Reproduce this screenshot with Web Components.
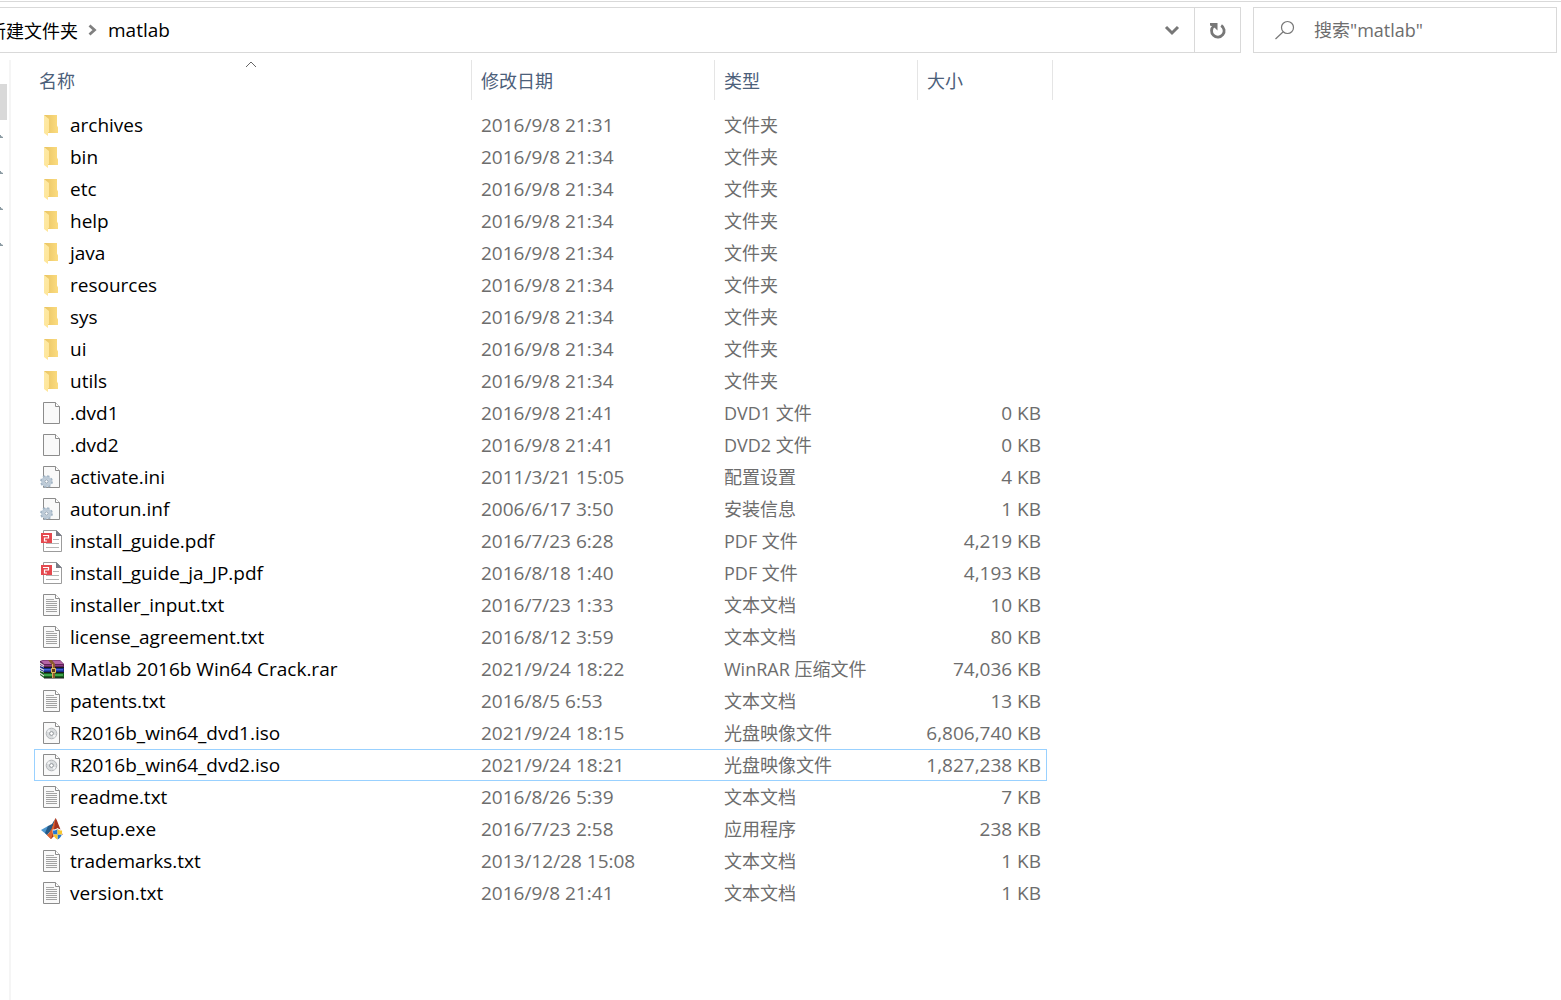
<!DOCTYPE html>
<html lang="zh-CN">
<head>
<meta charset="utf-8">
<title>matlab</title>
<style>
html,body{height:100%;margin:0;background:#fff}
body{font-family:"Open Sans","Noto Sans CJK SC",sans-serif;font-size:18px;color:#000}
</style>
</head>
<body>
<explorer-window>
  <address-bar slot="address"><a href="#parent" slot="parent">新建文件夹</a><a href="#matlab" slot="current">matlab</a></address-bar>
  <search-box slot="search" label='搜索"matlab"'></search-box>
  <nav-strip slot="nav"></nav-strip>
  <file-table slot="files"></file-table>
</explorer-window>
<script>
const define = (name, html, setup) => customElements.define(name, class extends HTMLElement {
  connectedCallback() {
    if (this.shadowRoot) return;
    const t = document.createElement('template');
    t.innerHTML = html;
    this.attachShadow({mode: 'open'}).append(t.content.cloneNode(true));
    if (setup) setup(this, this.shadowRoot);
  }
});

define('explorer-window', `
<style>
:host{display:flex;flex-direction:column;min-height:100%;box-sizing:border-box;border-top:1px solid #fff}
header{display:flex;gap:12px;border-top:1px solid #d9d9d9;padding:5px 4px 7px 0}
main{display:flex;flex:1}
slot[name=address]::slotted(*){flex:1;min-width:0}
slot[name=files]::slotted(*){flex:1;min-width:0}
</style>
<header><slot name="address"></slot><slot name="search"></slot></header>
<main><slot name="nav"></slot><slot name="files"></slot></main>`);

define('address-bar', `
<style>
:host{display:flex;box-sizing:border-box;height:46px;border:1px solid #d9d9d9;border-left:0}
nav{flex:1;display:flex;align-items:center;min-width:0}
.parent{display:flex;justify-content:flex-end;width:78px;overflow:hidden;white-space:nowrap;font-size:18px}
.current{font-size:19px}
::slotted(a){color:#000;text-decoration:none}
button{border:0;background:none;padding:0;width:45px;display:grid;place-items:center}
.refresh{border-left:1px solid #d9d9d9;width:46px}
.sep{width:30px;display:grid;place-items:center}
svg{display:block}
</style>
<nav aria-label="路径"><span class="parent"><slot name="parent"></slot></span>
<span class="sep"><svg width="12" height="12" fill="none" stroke="#808080" stroke-width="2.8"><path d="M2.500 1.500 7.500 6l-5 4.500"/></svg></span>
<span class="current"><slot name="current"></slot></span></nav>
<button aria-label="历史记录"><svg width="16" height="12" fill="none" stroke="#777" stroke-width="3"><path d="m2 3 6 6 6-6"/></svg></button>
<button class="refresh" aria-label="刷新"><svg width="18" height="18"><path d="M12.200 4.500A6.300 6.300 0 1 1 4.800 5" fill="none" stroke="#777" stroke-width="2.800"/><path d="M1 2h7.500v7.500L6.200 7.200 3.800 5.500 1 4.500z" fill="#777"/></svg></button>`);

define('search-box', `
<style>
:host{display:flex;align-items:center;box-sizing:border-box;width:304px;height:46px;border:1px solid #d9d9d9;padding-left:20px;gap:19px}
label{display:block}
svg{display:block}
input{flex:1;min-width:0;border:0;outline:0;padding:0;background:none;font:inherit;font-size:18px;color:#6d6d6d}
input::placeholder{color:#6d6d6d;opacity:1}
</style>
<label for="q" aria-label="搜索"><svg width="21" height="20" fill="none" stroke="#777" stroke-width="1.200"><circle cx="13.500" cy="7.500" r="6"/><path d="M9.200 11.800 1.500 19"/></svg></label>
<input id="q" type="text">`, (el, root) => {
  root.querySelector('input').placeholder = el.getAttribute('label');
});

define('nav-strip', `
<style>
:host{display:flex;flex-direction:column;box-sizing:border-box;width:11px;border-right:2px solid #f5f5f5}
.selected{width:7px;height:36px;margin-top:24px;background:#d9d9d9}
.pin{display:flex;align-items:center;height:36px}
</style>
<div class="selected"></div>`, (el, root) => {
  for (let i = 0; i < 4; i++) root.append(Object.assign(document.createElement('div'), {
    className: 'pin',
    innerHTML: '<svg width="4" height="8"><path d="M0 1 1 1 1 2 3 3v1L0 4z" fill="#8b9aa2"/></svg>'
  }));
});

const page = '<path d="M3.500 1.500h12l4 4v17h-16z" fill="#f9f9f9" stroke="#8c8c8c"/><path d="M15.500 1.500v4h4" fill="#fff" stroke="#8c8c8c"/>';
const rows = (ys, x1, x2, c) => `<path d="${ys.map(y => `M${x1} ${y}H${x2}`).join('')}" stroke="${c}" fill="none"/>`;
const art = {
  folder: '<defs><linearGradient id="b"><stop stop-color="#e9c362"/><stop offset="1" stop-color="#fbdc80"/></linearGradient><linearGradient id="f" y2="1"><stop stop-color="#fdeaa8"/><stop offset="1" stop-color="#ffe596"/></linearGradient></defs><path d="M4 2h13v10.500l1 2V20H6z" fill="url(#b)"/><path d="m4 2 5 4v13l-1 .5V23l-4-3z" fill="url(#f)"/>',
  blank: page,
  config: page + '<circle cx="6.500" cy="16.500" r="5.400" fill="#c3d0dc" stroke="#a3b5c5" stroke-width="2" stroke-dasharray="2.300 1.940"/><circle cx="6.500" cy="16.500" r="3.600" fill="#e8eff5" stroke="#bccad7" stroke-width="2.400"/><circle cx="6.500" cy="16.500" r="1.700" fill="#fff" stroke="#8799aa"/>',
  pdf: '<path d="M3.500 1.500h13l5 5v16h-18z" fill="#fff" stroke="#9c9c9c"/><path d="M16 1v6h6z" fill="#787c87"/>' + rows([10.5], 13, 19, '#b5b5b5') + rows([14.5, 18.5], 6, 19, '#b5b5b5') + '<path d="M1 4h11v10H1z" fill="#e5494f"/><path d="M3 6.500h5.500v2.500h-4v3H7" fill="none" stroke="#fff" stroke-width="1.200"/>',
  text: page + rows([6.5], 6, 14, '#aaa') + rows([8.5, 10.5, 12.5, 14.5, 16.5, 18.5], 6, 17, '#a2a2a2'),
  iso: page + '<circle cx="11.500" cy="12.500" r="5.300" fill="#d9dcde" stroke="#b2b5b8"/><path d="m11.500 12.500-4.500-2 2-2.500zm0 0 4.500 2-2 2.500z" fill="#f3f4f5"/><circle cx="11.500" cy="12.500" r="1.900" fill="#fff" stroke="#8e9397"/>',
  rar: '<path d="M0 4 3 3h17l4 4v3H4L0 8z" fill="#5f2358"/><path d="m1 4 3-.5h16L23.500 7H4z" fill="#b565a6"/><path d="M4 8h19v1H4z" fill="#8d3d83"/><path d="M0 9l4 1.500h20V15H4l-4-2z" fill="#172a86"/><path d="M4 12h19v1.500H4z" fill="#3f66d8"/><path d="M0 14l4 1.500h20V21H4l-4-3z" fill="#175f20"/><path d="M4 17h19v2H4z" fill="#3da54a"/><path d="m0 5.500 4 2.500v1.500L0 7zm0 5 4 2v1.500l-4-2zm0 5 4 2.500v1.500L0 17z" fill="#ddd"/><path d="M4 10.500h20M4 15.500h20M4 21h20" stroke="#1b1b1b"/><path d="M8 3h4l3 4v14h-3V8z" fill="#8a5a2e"/><path d="M12.500 7v14" stroke="#dba95b"/><path d="M11.500 11.500h4v4h-4z" fill="#5d3817" stroke="#e3bd63"/>',
  matlab: '<path d="m1 13 7-4 4 3-5 6z" fill="#4d97cf"/><path d="m8 9 4-2 3-5-3 10-5 6-2-2z" fill="#275a86"/><path d="M15.500 1C17 2 19 10 23 18l-6-2-6 6-4-4c4-2 6-10 8.500-17z" fill="#a5331f"/><path d="M15.500 1c-1 6-1 13-4.500 21l-4-4c4-2 6-10 8.500-17z" fill="#dd6530"/><path d="M12.500 12.500c2 0 3.500-.5 5-1.500 1.500 1 3.500 1.500 5.500 1.500 0 5-1.500 8.500-5.500 10.500-3.500-2-5-5.500-5-10.500z" fill="#fff"/><path d="M17.500 12v5.500h-4.200c-.2-1-.3-2.500-.3-4 2 0 3.200-.5 4.500-1.500zM17.500 17.500h4.300c-.8 2.500-2.200 4-4.300 5z" fill="#2478cf"/><path d="M17.500 12c1.300 1 2.700 1.500 4.600 1.500 0 1.500-.1 3-.3 4h-4.300zM13.300 17.500h4.200v5c-2-1-3.500-2.500-4.200-5z" fill="#f8c62c"/>'
};

define('file-icon', '<style>:host{display:block;width:24px;height:24px}svg{display:block}</style>', (el, root) => {
  root.innerHTML += `<svg width="24" height="24" viewBox="0 0 24 24" aria-hidden="true">${art[el.getAttribute('kind')]}</svg>`;
});

const D = '文件夹', T = '文本文档', I = '光盘映像文件';
const files = [
  ['folder','archives','2016/9/8 21:31',D,''],
  ...['bin','etc','help','java','resources','sys','ui','utils'].map(n => ['folder',n,'2016/9/8 21:34',D,'']),
  ['blank','.dvd1','2016/9/8 21:41','DVD1 文件','0 KB'],
  ['blank','.dvd2','2016/9/8 21:41','DVD2 文件','0 KB'],
  ['config','activate.ini','2011/3/21 15:05','配置设置','4 KB'],
  ['config','autorun.inf','2006/6/17 3:50','安装信息','1 KB'],
  ['pdf','install_guide.pdf','2016/7/23 6:28','PDF 文件','4,219 KB'],
  ['pdf','install_guide_ja_JP.pdf','2016/8/18 1:40','PDF 文件','4,193 KB'],
  ['text','installer_input.txt','2016/7/23 1:33',T,'10 KB'],
  ['text','license_agreement.txt','2016/8/12 3:59',T,'80 KB'],
  ['rar','Matlab 2016b Win64 Crack.rar','2021/9/24 18:22','WinRAR 压缩文件','74,036 KB'],
  ['text','patents.txt','2016/8/5 6:53',T,'13 KB'],
  ['iso','R2016b_win64_dvd1.iso','2021/9/24 18:15',I,'6,806,740 KB'],
  ['iso','R2016b_win64_dvd2.iso','2021/9/24 18:21',I,'1,827,238 KB'],
  ['text','readme.txt','2016/8/26 5:39',T,'7 KB'],
  ['matlab','setup.exe','2016/7/23 2:58','应用程序','238 KB'],
  ['text','trademarks.txt','2013/12/28 15:08',T,'1 KB'],
  ['text','version.txt','2016/9/8 21:41',T,'1 KB']
];

define('file-table', `
<style>
:host{display:block;padding-left:23px}
table{table-layout:fixed;width:1019px;border-collapse:separate;border-spacing:0}
.name{width:438px}.date{width:243px}.type{width:203px}.size{width:129px}.edge{width:6px}
th{padding:0 0 9px;font-weight:400}
th button{position:relative;display:block;box-sizing:border-box;width:100%;height:40px;padding:0 9px;border:0;border-right:1px solid #e5e5e5;background:none;font:inherit;font-size:18px;color:#4c607a;text-align:left}
th:first-child button{padding:0 5px}
.sort{position:absolute;top:0;left:50%;margin-left:-8px}
td{box-sizing:border-box;height:32px;padding:0 9px;font-size:19px;line-height:24px;color:#6d6d6d;white-space:nowrap;border:solid transparent;border-width:1px 0}
td:nth-child(1){padding:0 0 0 5px;color:#000;border-left-width:1px}
td:nth-child(3){font-size:18px}
td:nth-child(4){padding:0 5px 0 0;text-align:right;border-right-width:1px}
.focused td{border-color:#99d1ff}
.entry{display:flex;align-items:center;gap:6px}
</style>
<table>
<colgroup><col class="name"><col class="date"><col class="type"><col class="size"><col class="edge"></colgroup>
<thead><tr>
<th scope="col" aria-sort="ascending"><button>名称<svg class="sort" width="12" height="8" fill="none" stroke="#666"><path d="m1 7 5-5 5 5"/></svg></button></th>
<th scope="col"><button>修改日期</button></th>
<th scope="col"><button>类型</button></th>
<th scope="col" colspan="2"><button>大小</button></th>
</tr></thead>
<tbody></tbody>
</table>`, (el, root) => {
  root.querySelector('tbody').innerHTML = files.map(([kind, name, date, type, size]) =>
    `<tr${name === 'R2016b_win64_dvd2.iso' ? ' class="focused"' : ''}><td><div class="entry"><file-icon kind="${kind}"></file-icon><span>${name}</span></div></td><td>${date}</td><td>${type}</td><td>${size}</td></tr>`).join('');
});
</script>
</body>
</html>
